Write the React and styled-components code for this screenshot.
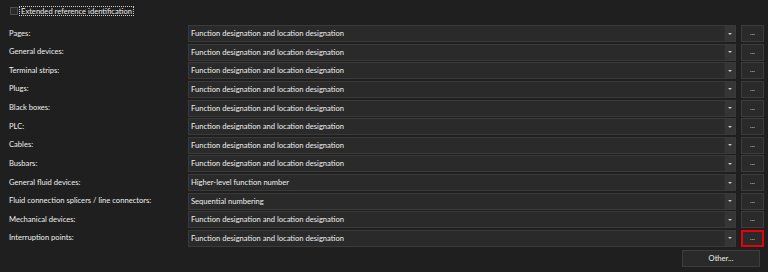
import React from "react";
import styled, { createGlobalStyle } from "styled-components";

const GlobalStyle = createGlobalStyle`
  html, body {
    margin: 0;
    padding: 0;
    background: #1f1f1f;
  }
  body {
    font-family: "Lato", "Liberation Sans", sans-serif;
    font-size: 7.6px;
    color: #eeeeee;
  }
`;

const Page = styled.div`
  width: 768px;
  height: 272px;
  box-sizing: border-box;
  padding: 6px 4px 0 9px;
  display: flex;
  flex-direction: column;
`;

const CheckRow = styled.label`
  display: flex;
  align-items: center;
  height: 9px;
  margin-left: 1px;
`;

const CheckBox = styled.span`
  width: 6px;
  height: 6px;
  border: 1px solid #4e4e4e;
  background: #2a2a2a;
  margin-right: 1px;
`;

const FocusText = styled.span`
  border: 1px dotted #cfcfcf;
  padding: 0 1px;
  line-height: 8px;
`;

const Grid = styled.div`
  margin-top: 10px;
  display: grid;
  grid-template-columns: 174px 1fr 23px;
  column-gap: 5px;
  row-gap: 1.64px;
  align-items: center;
`;

const Label = styled.span`
  white-space: nowrap;
  line-height: 15px;
  margin-top: -1px;
`;

const Combo = styled.div`
  height: 17px;
  box-sizing: border-box;
  display: flex;
  background: #2a2a2a;
  border: 1px solid #3a3a3a;
`;

const ComboText = styled.span`
  flex: 1;
  padding-left: 2px;
  line-height: 15px;
  white-space: nowrap;
`;

const Arrow = styled.span`
  width: 10px;
  display: flex;
  align-items: center;
  justify-content: center;
  background: #353535;
  border-left: 1px solid #2e2e2e;
  &::after {
    content: "";
    border-left: 2px solid transparent;
    border-right: 2px solid transparent;
    border-top: 2px solid #c8c8c8;
  }
`;

const DotsButton = styled.button`
  height: 17px;
  box-sizing: border-box;
  padding: 0 0 3px;
  background: #2a2a2a;
  border: ${(p) => (p.$marked ? "2px solid #e8000b" : "1px solid #3d3d3d")};
  color: #d0d0d0;
  font: inherit;
  font-size: 7px;
  line-height: 8px;
`;

const Footer = styled.div`
  display: flex;
  justify-content: flex-end;
  padding-right: 4px;
  margin-top: 3px;
`;

const OtherButton = styled.button`
  width: 78px;
  height: 17px;
  box-sizing: border-box;
  background: #2a2a2a;
  border: 1px solid #3d3d3d;
  color: #eeeeee;
  font: inherit;
  padding: 0;
`;

const rows = [
  ["Pages:", "Function designation and location designation"],
  ["General devices:", "Function designation and location designation"],
  ["Terminal strips:", "Function designation and location designation"],
  ["Plugs:", "Function designation and location designation"],
  ["Black boxes:", "Function designation and location designation"],
  ["PLC:", "Function designation and location designation"],
  ["Cables:", "Function designation and location designation"],
  ["Busbars:", "Function designation and location designation"],
  ["General fluid devices:", "Higher-level function number"],
  ["Fluid connection splicers / line connectors:", "Sequential numbering"],
  ["Mechanical devices:", "Function designation and location designation"],
  ["Interruption points:", "Function designation and location designation"],
];

export default function App() {
  return (
    <>
      <GlobalStyle />
      <Page>
        <CheckRow>
          <CheckBox />
          <FocusText>Extended reference identification</FocusText>
        </CheckRow>
        <Grid>
          {rows.map(([label, value], i) => (
            <React.Fragment key={label}>
              <Label>{label}</Label>
              <Combo>
                <ComboText>{value}</ComboText>
                <Arrow />
              </Combo>
              <DotsButton $marked={i === rows.length - 1}>...</DotsButton>
            </React.Fragment>
          ))}
        </Grid>
        <Footer>
          <OtherButton>Other...</OtherButton>
        </Footer>
      </Page>
    </>
  );
}
